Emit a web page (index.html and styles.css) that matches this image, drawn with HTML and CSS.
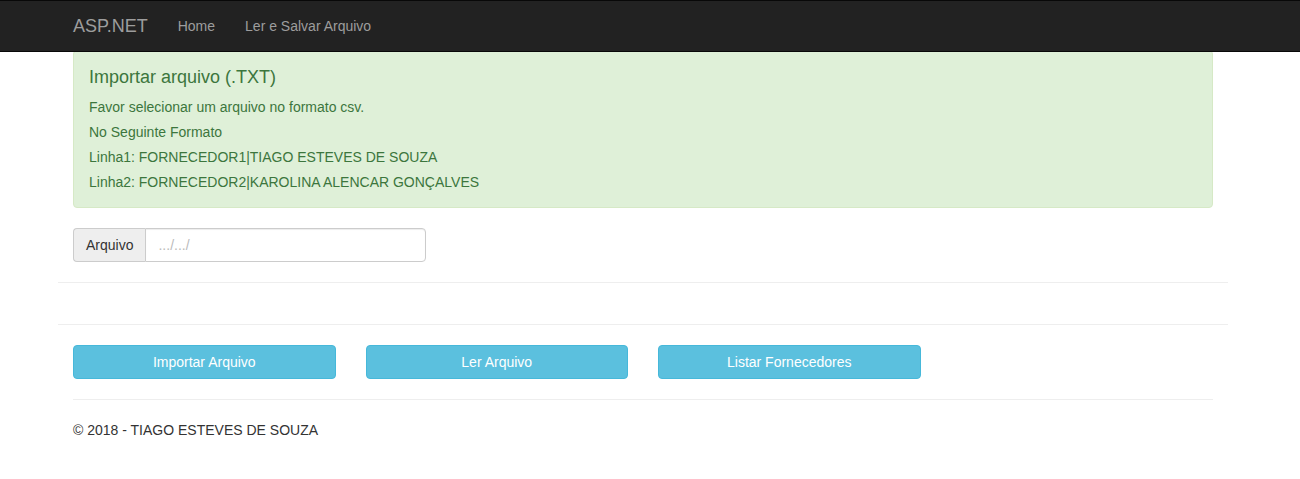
FILE: index.html
```html
<!DOCTYPE html>
<html lang="pt">
<head>
<meta charset="utf-8">
<title>Importar arquivo</title>
<link rel="stylesheet" href="styles.css">
</head>
<body>
<nav class="navbar">
  <div class="page">
    <div class="container nav-inner">
      <a class="brand" href="#">ASP.NET</a>
      <a class="nav-link" href="#">Home</a>
      <a class="nav-link" href="#">Ler e Salvar Arquivo</a>
    </div>
  </div>
</nav>
<div class="page">
  <div class="container">
    <div class="alert">
      <h4>Importar arquivo (.TXT)</h4>
      <p>Favor selecionar um arquivo no formato csv.</p>
      <p>No Seguinte Formato</p>
      <p>Linha1: FORNECEDOR1|TIAGO ESTEVES DE SOUZA</p>
      <p>Linha2: FORNECEDOR2|KAROLINA ALENCAR GONÇALVES</p>
    </div>
    <div class="input-group">
      <span class="addon">Arquivo</span>
      <input class="field" type="text" placeholder=".../.../">
    </div>
    <div class="row">
      <hr class="rule">
      <div class="spacer"></div>
      <hr class="rule">
    </div>
    <div class="row buttons">
      <div class="col"><button class="btn">Importar Arquivo</button></div>
      <div class="col"><button class="btn">Ler Arquivo</button></div>
      <div class="col"><button class="btn">Listar Fornecedores</button></div>
    </div>
    <hr class="rule footer-rule">
    <footer class="footer">
      <p>© 2018 - TIAGO ESTEVES DE SOUZA</p>
    </footer>
  </div>
</div>
</body>
</html>
```

FILE: styles.css
```css
* { box-sizing: border-box; }
html, body { margin: 0; }
body {
  font-family: "Liberation Sans", Arial, Helvetica, sans-serif;
  font-size: 14px;
  line-height: 20px;
  color: #333;
  background: #fff;
  padding-top: 50px;
}
.page { margin-right: 14px; }
.container {
  width: 1170px;
  padding: 0 15px;
  margin: 0 auto;
}
.navbar {
  position: fixed;
  top: 0;
  left: 0;
  right: 0;
  z-index: 10;
  height: 52px;
  background: #222;
  border-top: 1px solid #080808;
  border-bottom: 1px solid #080808;
}
.nav-inner {
  display: flex;
  align-items: center;
  height: 50px;
  padding: 0;
}
.brand {
  font-size: 18px;
  line-height: 20px;
  padding: 15px;
  color: #9d9d9d;
  text-decoration: none;
}
.nav-link {
  padding: 15px;
  color: #9d9d9d;
  text-decoration: none;
  font-size: 14px;
  line-height: 20px;
}
.alert {
  background: #dff0d8;
  border: 1px solid #d6e9c6;
  color: #3c763d;
  border-radius: 4px;
  padding: 16px 15px 15px;
  margin-bottom: 20px;
}
.alert h4 {
  margin: 0 0 10px;
  font-size: 18px;
  font-weight: 500;
  line-height: 20px;
}
.alert p { margin: 0 0 5px; line-height: 20px; }
.alert p:last-child { margin-bottom: 0; }
.input-group {
  display: flex;
  width: 353px;
  height: 34px;
}
.addon {
  background: #eee;
  border: 1px solid #ccc;
  border-right: 0;
  border-radius: 4px 0 0 4px;
  padding: 6px 12px;
  font-size: 14px;
  line-height: 20px;
  color: #333;
}
.field {
  flex: 1;
  border: 1px solid #ccc;
  border-radius: 0 4px 4px 0;
  padding: 6px 12px;
  font: 14px/20px "Liberation Sans", Arial, sans-serif;
  color: #555;
  box-shadow: inset 0 1px 1px rgba(0,0,0,.075);
  outline: none;
}
.field::placeholder { color: #bbb; }
.row { margin: 0 -15px; }
.rule {
  border: 0;
  border-top: 1px solid #eee;
  margin: 20px 0;
  height: 0;
}
.spacer { height: 1px; }
.buttons { display: flex; }
.col {
  width: 292.5px;
  padding: 0 15px;
}
.btn {
  display: block;
  width: 100%;
  height: 34px;
  background: #5bc0de;
  border: 1px solid #46b8da;
  border-radius: 4px;
  color: #fff;
  font: 14px/20px "Liberation Sans", Arial, sans-serif;
  padding: 6px 12px;
  cursor: pointer;
}
.footer p { margin: 0 0 10px; }
```
